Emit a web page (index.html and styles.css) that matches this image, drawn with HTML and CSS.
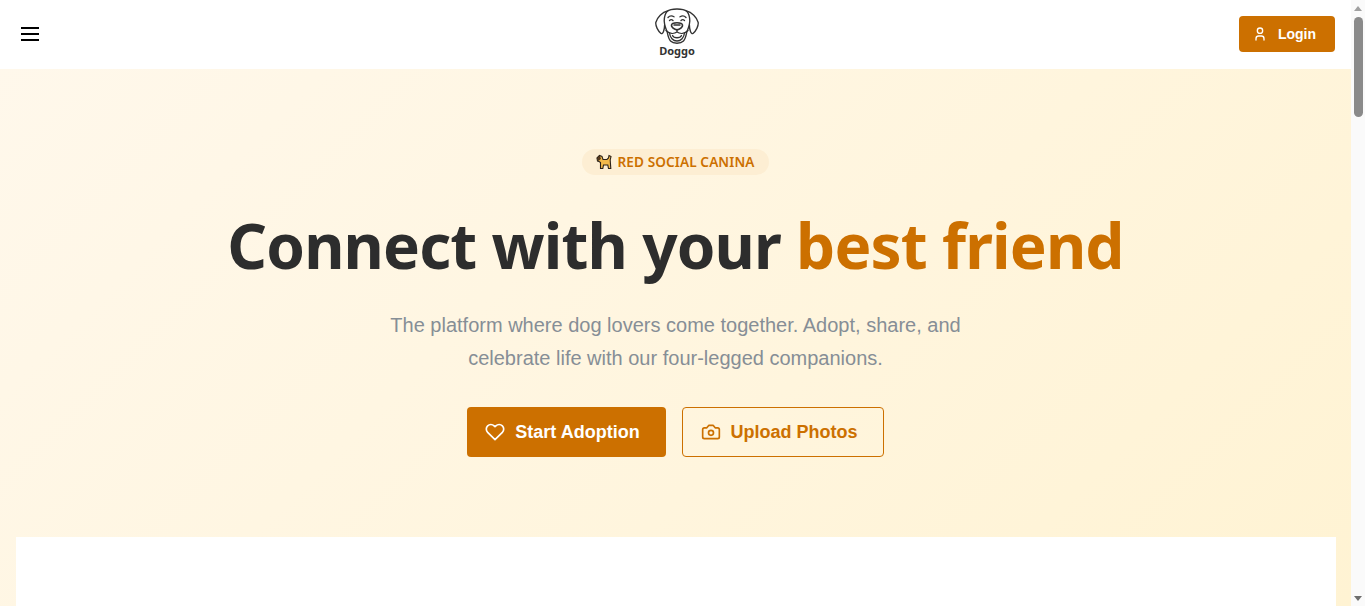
FILE: index.html
```html
<!DOCTYPE html>
<html lang="en">
<head>
<meta charset="utf-8">
<title>Doggo</title>
<link rel="stylesheet" href="styles.css">
</head>
<body>
<div class="window">
  <div class="page">
    <header class="navbar">
      <button class="burger" aria-label="Menu"><span></span><span></span><span></span></button>
      <a class="logo">
        <svg class="logo-mark" viewBox="0 0 44 37" fill="none" stroke="#333" stroke-width="1.350" stroke-linecap="round" stroke-linejoin="round">
          <path d="M12 3.500C16 .2 28 .2 32 3.500C34 6 34.800 9 34.800 13C34.800 18 33 21 31.800 24C31 28 30.500 31 28.500 33C25.500 36 18.500 36 15.500 33C13.500 31 13 28 12.200 24C11 21 9.200 18 9.200 13C9.200 9 10 6 12 3.500Z"/>
          <path d="M12.500 3C7.500 4 2 9.500 .8 14.500C.4 18 3 23 6 25.500C8 26.500 9.500 22 9.600 17"/>
          <path d="M31.500 3C36.500 4 42 9.500 43.200 14.500C43.600 18 41 23 38 25.500C36 26.500 34.500 22 34.400 17"/>
          <path d="M13 9.500C14.500 7.800 17 7.500 19 8.800M25 8.800C27 7.500 29.500 7.800 31 9.500"/>
          <path d="M14.500 12.500C15.500 11.500 17 11.500 18 12.500M26 12.500C27 11.500 28.500 11.500 29.500 12.500"/>
          <path d="M16.500 17C17 14 27 14 27.500 17C28 19 24.500 21.500 22 21.800C19.500 21.500 16 19 16.500 17Z" stroke-width="1.700"/>
          <path d="M19 17H25" stroke-width="1.500"/>
          <path d="M22 22V24M11 22.500C14.500 26 19 26 22 24C25 26 29.500 26 33 22.500"/>
          <path d="M14.500 25C15 29.500 18 33 22 33C26 33 29 29.500 29.500 25"/>
          <path d="M17.500 27.500C19 30.500 25 30.500 26.500 27.500"/>
        </svg>
        <span class="logo-text">Doggo</span>
      </a>
      <button class="login">
        <svg class="icon-sm" viewBox="0 0 24 24" fill="none" stroke="currentColor" stroke-width="2" stroke-linecap="round" stroke-linejoin="round"><circle cx="12" cy="7" r="4"/><path d="M6 21v-2a4 4 0 0 1 4-4h4a4 4 0 0 1 4 4v2"/></svg>
        <span>Login</span>
      </button>
    </header>
    <section class="hero">
      <div class="badge">
        <svg class="dog" viewBox="0 0 16 16">
          <path d="M1 4L3.500 1.500L6 2.500L7 5.500L11 5.500L12.500 4L13 1.500L15 2.500L14.200 6L14.800 14.500L12.500 14.500L11.800 11L7.500 11L6.800 14.500L4.500 14.500L4.500 8.500L3 7.500L1.500 7Z" fill="#f3b94a" stroke="#2b2118" stroke-width="1.100"/>
          <path d="M1 4L3.500 1.500L4.500 5L2.500 6.500Z" fill="#5a3a1e" stroke="#2b2118" stroke-width=".6"/>
        </svg>
        <span>RED SOCIAL CANINA</span>
      </div>
      <h1 class="title">Connect with your <em>best friend</em></h1>
      <p class="lead">The platform where dog lovers come together. Adopt, share, and<br>celebrate life with our four-legged companions.</p>
      <div class="actions">
        <button class="btn btn-fill">
          <svg class="icon" viewBox="0 0 24 24" fill="none" stroke="currentColor" stroke-width="2" stroke-linecap="round" stroke-linejoin="round"><path d="M20.840 4.610a5.500 5.500 0 0 0-7.780 0L12 5.670l-1.060-1.060a5.500 5.500 0 0 0-7.780 7.780L12 21.230l8.840-8.840a5.500 5.500 0 0 0 0-7.780z"/></svg>
          <span>Start Adoption</span>
        </button>
        <button class="btn btn-line">
          <svg class="icon" viewBox="0 0 24 24" fill="none" stroke="currentColor" stroke-width="2" stroke-linecap="round" stroke-linejoin="round"><path d="M14.500 4h-5L7 7H4a2 2 0 0 0-2 2v9a2 2 0 0 0 2 2h16a2 2 0 0 0 2-2V9a2 2 0 0 0-2-2h-3z"/><circle cx="12" cy="13" r="3"/></svg>
          <span>Upload Photos</span>
        </button>
      </div>
    </section>
    <section class="panel"></section>
  </div>
  <div class="scrollbar" aria-hidden="true">
    <div class="arrow-up"></div>
    <div class="track"><div class="thumb"></div></div>
    <div class="arrow-down"></div>
  </div>
</div>
</body>
</html>
```
FILE: styles.css
```css
* { box-sizing: border-box; }
html, body { margin: 0; height: 100%; overflow: hidden; }
body { font-family: "Liberation Sans", Arial, sans-serif; background: #fff; }
.window { display: flex; height: 606px; }
.page { flex: 1; min-width: 0; display: flex; flex-direction: column; overflow: hidden; background: linear-gradient(135deg, #fff8ec 0%, #fff3d3 100%); }

.navbar { flex: none; height: 69px; background: #fff; display: flex; align-items: center; justify-content: space-between; padding: 0 16px; position: relative; }
.burger { width: 28px; height: 28px; padding: 0 1px; margin: 0; border: 0; background: none; display: flex; flex-direction: column; justify-content: center; gap: 4px; align-items: center; margin-top: -2px; }
.burger span { display: block; width: 18px; height: 2px; background: #000; }
.logo { position: absolute; left: 655px; top: 8px; width: 44px; display: flex; flex-direction: column; align-items: center; }
.logo-mark { width: 44px; height: 37px; display: block; }
.logo-text { font-family: "Noto Sans", sans-serif; font-weight: 700; font-size: 11px; line-height: 12px; color: #333; }
.login { width: 96px; height: 36px; margin-top: -2px; border: 0; border-radius: 4px; background: #cc7000; color: #fff; font: 700 14px "Liberation Sans", Arial, sans-serif; display: flex; align-items: center; justify-content: center; gap: 10px; padding: 0 6px 0 0; }
.icon-sm { width: 16px; height: 16px; display: block; }

.hero { flex: none; height: 468px; display: flex; flex-direction: column; align-items: center; padding-top: 80px; }
.badge { height: 26px; border-radius: 13px; background: #fdeed3; display: flex; align-items: center; gap: 5px; padding: 0 14px 2px; color: #cc7000; font-family: "Noto Sans", sans-serif; font-weight: 600; font-size: 13.600px; letter-spacing: .1px; }
.dog { width: 16px; height: 16px; display: block; margin-top: 2px; }
.title { margin: 28px 0 0; font-family: "Noto Sans", sans-serif; font-weight: 700; font-size: 62px; letter-spacing: -.87px; line-height: 84px; color: #2d2d2d; white-space: nowrap; }
.title em { font-style: normal; color: #cc7000; }
.lead { margin: 22px 0 0; font-size: 20px; line-height: 33px; color: #868e96; text-align: center; }
.actions { display: flex; gap: 16px; margin-top: 32px; }
.btn { height: 50px; border-radius: 4px; font: 700 18px "Liberation Sans", Arial, sans-serif; display: flex; align-items: center; gap: 10px; padding: 0 8px 0 0; justify-content: center; }
.icon { width: 20px; height: 20px; display: block; }
.btn-fill { width: 199px; border: 0; background: #cc7000; color: #fff; }
.btn-line { width: 202px; border: 1px solid #cc7000; background: transparent; color: #cc7000; }

.panel { flex: 1; margin: 0 15px 0 16px; background: #fff; }

.scrollbar { flex: none; width: 14px; background: #fafafa; display: flex; flex-direction: column; align-items: center; }
.arrow-up { width: 0; height: 0; margin: 6px 0 4px; border: 4px solid transparent; border-top: 0; border-bottom: 5px solid #a0a0a0; }
.track { flex: 1; width: 100%; display: flex; justify-content: center; }
.thumb { width: 9px; height: 100px; margin-top: 2px; border-radius: 5px; background: #8a8a8a; }
.arrow-down { width: 0; height: 0; margin: 4px 0 5px; border: 4px solid transparent; border-bottom: 0; border-top: 5px solid #6e6e6e; }
```
